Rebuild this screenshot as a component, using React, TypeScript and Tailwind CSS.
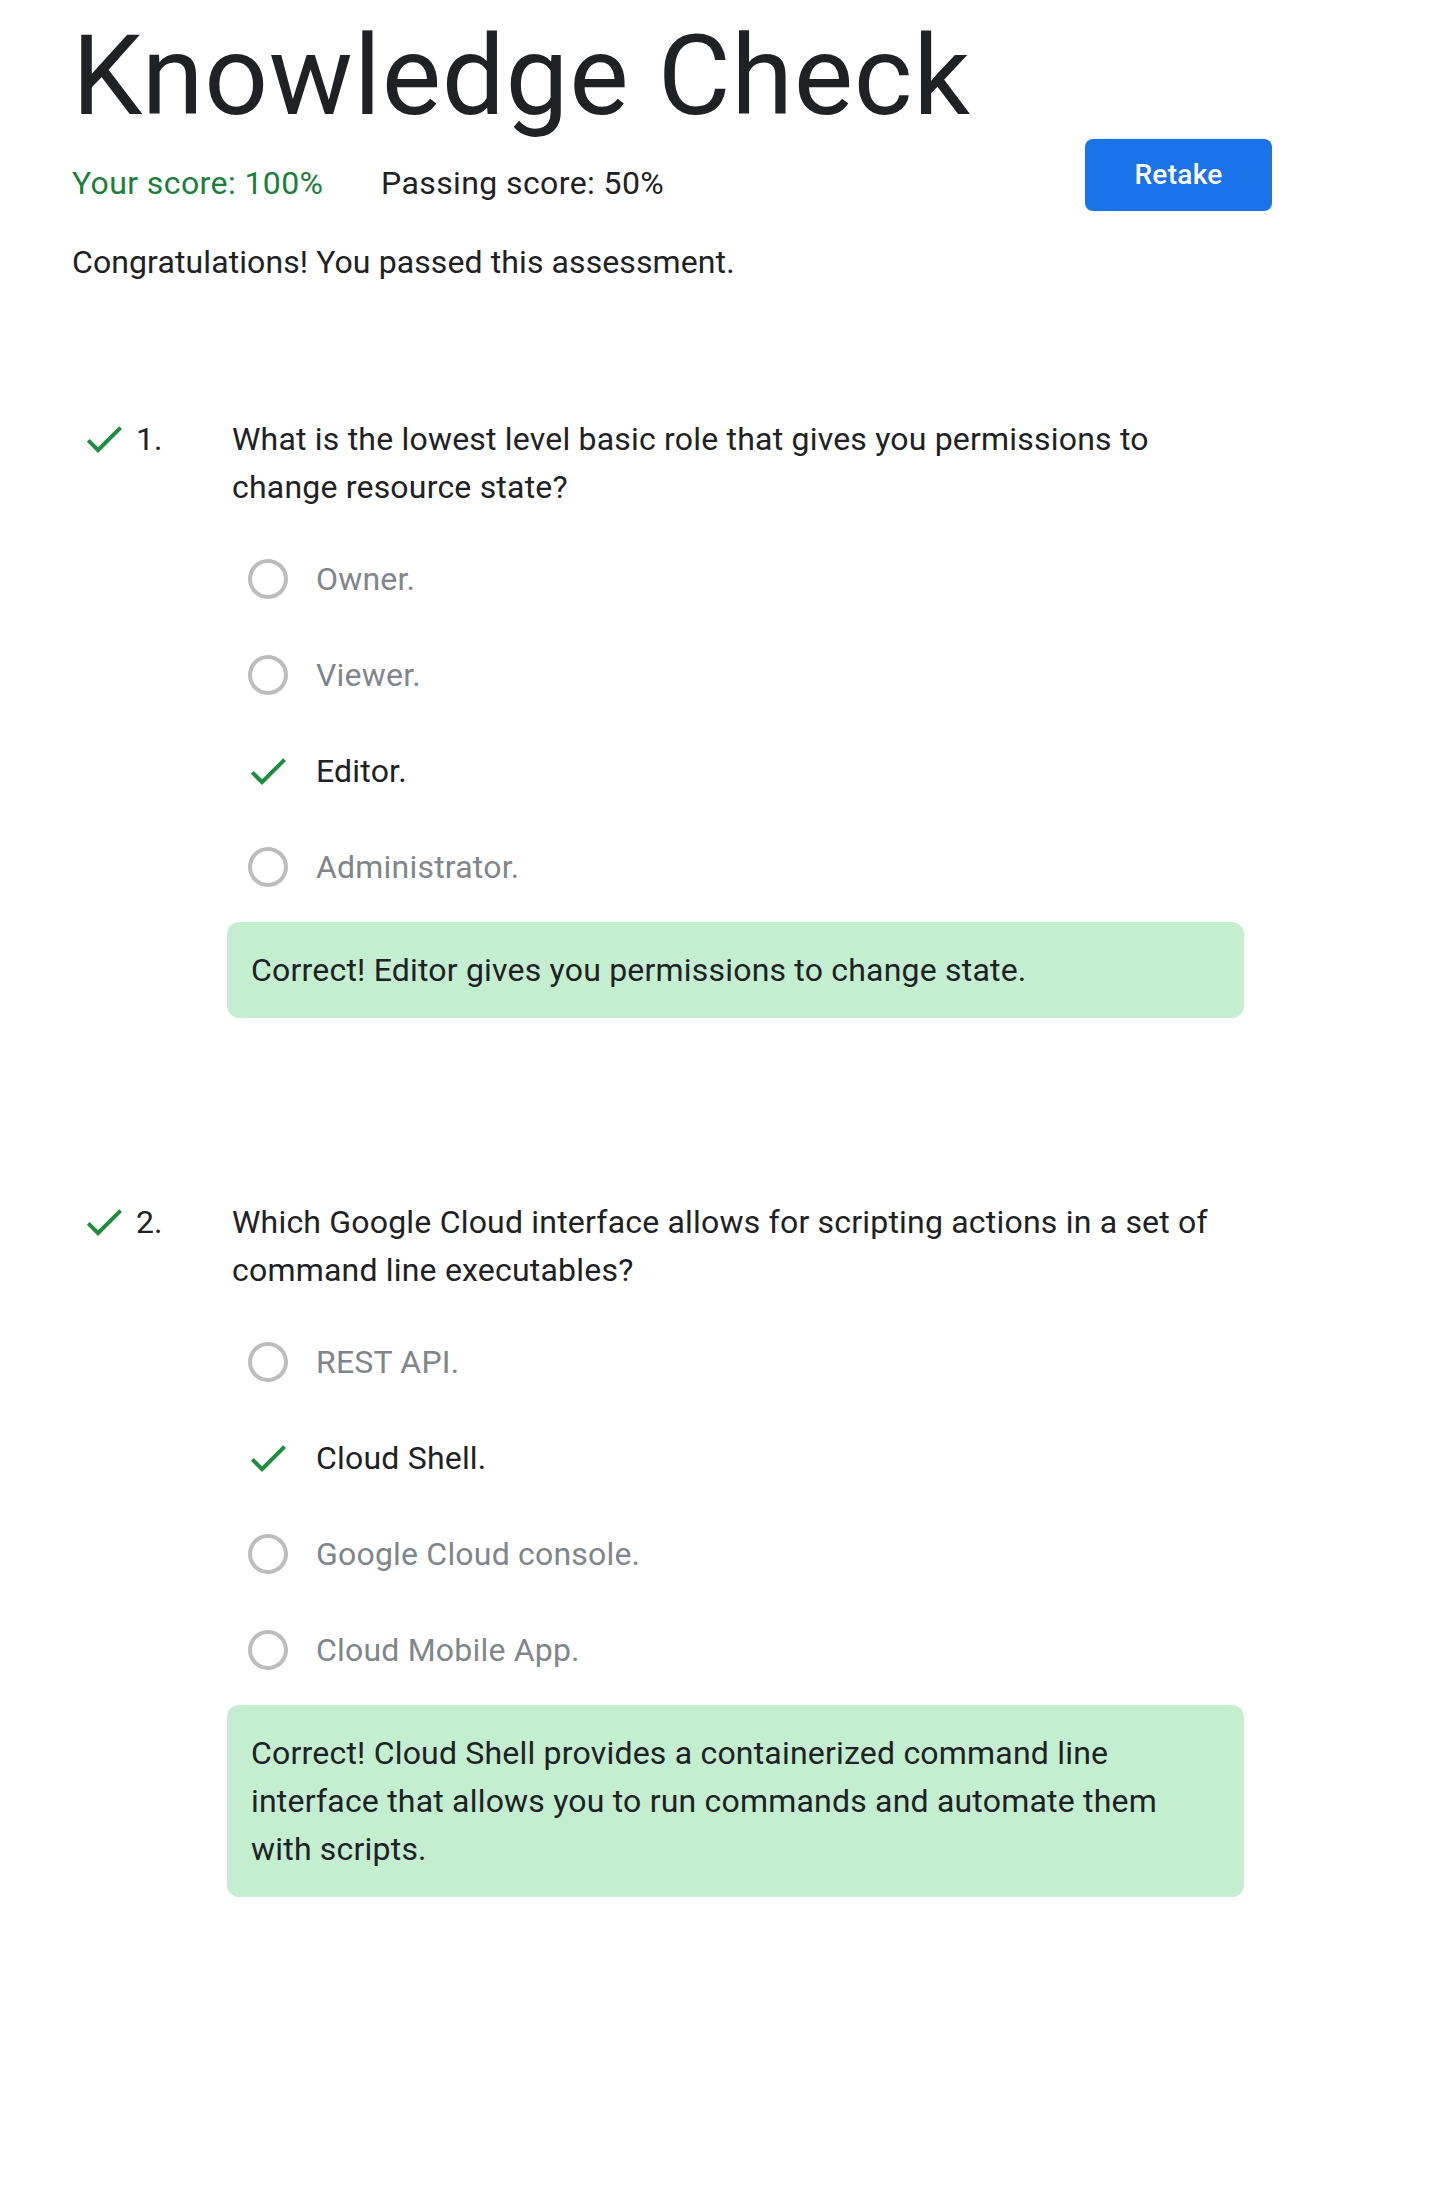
import React from "react";

type Option = { text: string; correct?: boolean };

type Question = {
  num: number;
  text: string;
  options: Option[];
  feedback: string;
};

const QUESTIONS: Question[] = [
  {
    num: 1,
    text: "What is the lowest level basic role that gives you permissions to change resource state?",
    options: [
      { text: "Owner." },
      { text: "Viewer." },
      { text: "Editor.", correct: true },
      { text: "Administrator." },
    ],
    feedback: "Correct! Editor gives you permissions to change state.",
  },
  {
    num: 2,
    text: "Which Google Cloud interface allows for scripting actions in a set of command line executables?",
    options: [
      { text: "REST API." },
      { text: "Cloud Shell.", correct: true },
      { text: "Google Cloud console." },
      { text: "Cloud Mobile App." },
    ],
    feedback:
      "Correct! Cloud Shell provides a containerized command line interface that allows you to run commands and automate them with scripts.",
  },
];

/** Material "check" glyph */
function CheckIcon() {
  return (
    <svg viewBox="0 0 24 24" className="w-[48px] h-[48px]" fill="#1e8e3e">
      <path d="M9 16.17L4.83 12l-1.42 1.41L9 19 21 7l-1.41-1.41z" />
    </svg>
  );
}

/** Material "radio_button_unchecked" glyph */
function RadioIcon() {
  return (
    <svg viewBox="0 0 24 24" className="w-[48px] h-[48px]" fill="#bdbdbd">
      <path d="M12 2C6.48 2 2 6.48 2 12s4.48 10 10 10 10-4.48 10-10S17.52 2 12 2zm0 18c-4.42 0-8-3.58-8-8s3.58-8 8-8 8 3.58 8 8-3.58 8-8 8z" />
    </svg>
  );
}

function QuestionBlock({ q }: { q: Question }) {
  return (
    <div className="flex">
      {/* Result mark */}
      <div className="ml-[8px] w-[48px] h-[48px] shrink-0">
        <CheckIcon />
      </div>
      <div className="ml-[8px] w-[91px] shrink-0 text-[32px] leading-[48px]">{q.num}.</div>

      <div className="w-[1017px]">
        <p className="pl-[5px] text-[32px] leading-[48px] tracking-[0.2px]">{q.text}</p>

        {/* Options */}
        <div className="mt-[44px] pl-[17px] flex flex-col gap-[48px]">
          {q.options.map((o) => (
            <div key={o.text} className="flex items-center h-[48px]">
              <div className="w-[48px] h-[48px] shrink-0">{o.correct ? <CheckIcon /> : <RadioIcon />}</div>
              <span
                className={`ml-[24px] text-[32px] leading-[48px] tracking-[0.2px] ${
                  o.correct ? "text-[#202124]" : "text-[#80868b]"
                }`}
              >
                {o.text}
              </span>
            </div>
          ))}
        </div>

        {/* Feedback */}
        <div className="mt-[31px] rounded-[12px] bg-[#c4eed0] pl-[24px] pr-[32px] py-[24px] text-[32px] leading-[48px] tracking-[0.2px]">
          {q.feedback}
        </div>
      </div>
    </div>
  );
}

export default function App() {
  return (
    <div className="min-h-screen bg-white pl-[72px] pt-[20px] pb-[300px] text-[#202124] font-['Roboto',sans-serif]">
      <h1 className="text-[112px] leading-[112px] font-normal tracking-[0.7px]">Knowledge Check</h1>

      {/* Score row */}
      <div className="mt-[7px] w-[1200px] flex items-start justify-between">
        <div className="pt-[20px] flex text-[32px] leading-[48px] tracking-[0.4px]">
          <span className="w-[309px] text-[#188038]">Your score: 100%</span>
          <span>Passing score: 50%</span>
        </div>
        <button className="w-[187px] h-[72px] rounded-[8px] bg-[#1a73e8] text-white text-[28px] font-medium tracking-[0.3px]">
          Retake
        </button>
      </div>

      <p className="mt-[27px] text-[32px] leading-[48px] tracking-[0.1px]">
        Congratulations! You passed this assessment.
      </p>

      <div className="mt-[129px] flex flex-col gap-[180px]">
        {QUESTIONS.map((q) => (
          <QuestionBlock key={q.num} q={q} />
        ))}
      </div>
    </div>
  );
}
